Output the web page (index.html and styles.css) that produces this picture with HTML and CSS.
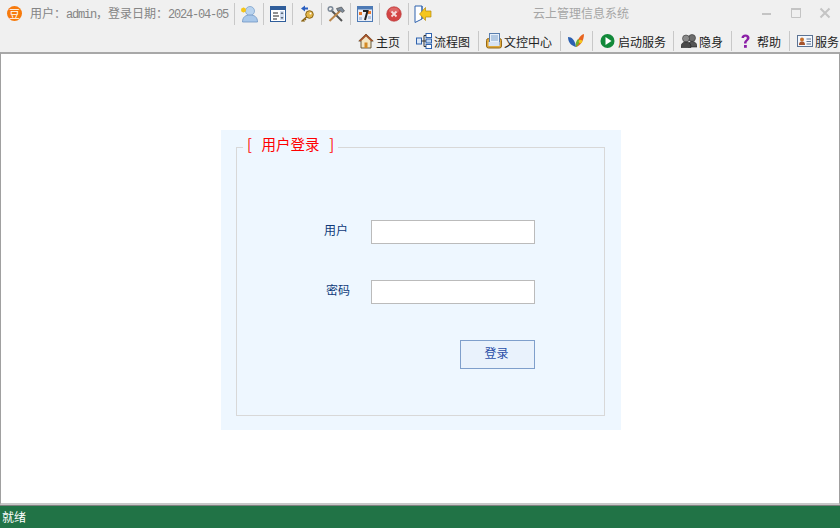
FILE: index.html
```html
<!DOCTYPE html>
<html lang="en">
<head>
    <meta charset="UTF-8">
    <meta name="viewport" content="width=device-width, initial-scale=1.0">
    <title>云上管理信息系统</title>
    <link rel="stylesheet" href="styles.css">
</head>
<body>

<!-- Title row -->
<div class="titleBar">
    <span class="logo">豆</span>
    <span class="userInfo">用户：<span class="latin">admin</span>，登录日期：<span class="latin">2024-04-05</span></span>
    <div class="quickTools">
        <span class="quickTool">
            <svg class="iconWide" viewBox="0 0 18 18">
                <circle cx="10" cy="6" r="4.500" fill="#b9d3ee" stroke="#7fa3cc" stroke-width=".8"/>
                <path d="M2.500 17c0-5 3-7 7.500-7s7.500 2 7.500 7z" fill="#a9c8ea" stroke="#6f96c4" stroke-width=".8"/>
                <path d="M1 5h5M3.500 2.500v5M1.700 3.200l3.600 3.600M5.300 3.200l-3.600 3.600" stroke="#f5c518" stroke-width="1.300"/>
            </svg>
        </span>
        <span class="quickTool">
            <svg class="icon" viewBox="0 0 16 16">
                <rect x=".5" y=".5" width="15" height="15" fill="#fff" stroke="#2f5d9a"/>
                <rect x="1" y="1" width="14" height="3" fill="#2f5d9a"/>
                <path d="M3 7h5M3 10h6M3 13h4" stroke="#222"/>
                <rect x="10" y="5" width="4" height="9" fill="#cfdcf0"/>
                <path d="M11 8l1-1.500 1 1.500M11 11l1 1.500 1-1.500" stroke="#234" fill="none" stroke-width=".8"/>
            </svg>
        </span>
        <span class="quickTool">
            <svg class="iconWide" viewBox="0 0 18 18">
                <path d="M3 3.500l4-3v2h3v2H7v2z" fill="#2a5fc0"/>
                <path d="M9 11.500L3.500 16.500M5 15l1.500 1.500M6.500 13.500L8 15" stroke="#8a6414" stroke-width="1.500" fill="none"/>
                <circle cx="11.500" cy="9.500" r="3.800" fill="#e2b548" stroke="#8a6414"/>
                <circle cx="12.500" cy="8.500" r="1" fill="#fff"/>
            </svg>
        </span>
        <span class="quickTool">
            <svg class="iconWide" viewBox="0 0 18 18">
                <path d="M4 5l11 11" stroke="#555" stroke-width="2"/>
                <path d="M13 6L2.500 16" stroke="#b9854a" stroke-width="2"/>
                <path d="M9.500 3.500l5-1.500 3 4-2 1.500-3-2-1.500 1z" fill="#7d8a99" stroke="#444" stroke-width=".6"/>
                <circle cx="3.500" cy="4" r="2.300" fill="none" stroke="#7d8a99" stroke-width="1.500"/>
            </svg>
        </span>
        <span class="quickTool">
            <svg class="icon" viewBox="0 0 16 16">
                <rect x=".5" y=".5" width="15" height="15" fill="#e9eef7" stroke="#4d7ab5"/>
                <rect x="1" y="1" width="14" height="2.500" fill="#4d7ab5"/>
                <rect x="2" y="6" width="3" height="3" fill="#e8762a"/>
                <rect x="11" y="5" width="3" height="3" fill="#e8762a"/>
                <rect x="2" y="11" width="3" height="3" fill="#b4c6e0"/>
                <rect x="11" y="10" width="3" height="3" fill="#b4c6e0"/>
                <path d="M6 5h4.500L8 14" fill="none" stroke="#222" stroke-width="2"/>
            </svg>
        </span>
        <span class="quickTool">
            <svg class="icon" viewBox="0 0 16 16">
                <circle cx="8" cy="8" r="7.300" fill="#d34444" stroke="#b73c3c" stroke-width=".6"/>
                <ellipse cx="8" cy="4.500" rx="5" ry="3" fill="#e67f7f" opacity=".6"/>
                <path d="M5.500 5.500l5 5M10.500 5.500l-5 5" stroke="#f6dcdc" stroke-width="1.800"/>
            </svg>
        </span>
        <span class="quickTool">
            <svg class="iconWide" viewBox="0 0 18 18">
                <path d="M1 1h7v13l-7 3.500z" fill="#fff" stroke="#2f62ad"/>
                <path d="M8 1v13" stroke="#2f62ad"/>
                <path d="M5.500 9l6-6.500v3.500h5.500v6h-5.500v3.500z" fill="#f5c61e" stroke="#b58a10" stroke-width=".7"/>
            </svg>
        </span>
    </div>
    <span class="appTitle">云上管理信息系统</span>
    <div class="windowButtons">
        <svg width="12" height="12" viewBox="0 0 12 12"><path d="M1 7h9" stroke="#c4c4c4" stroke-width="2"/></svg>
        <svg width="12" height="12" viewBox="0 0 12 12"><path d="M1.500 1.500h9v9h-9z" fill="none" stroke="#c4c4c4"/><path d="M1 2h10" stroke="#c4c4c4" stroke-width="2"/></svg>
        <svg width="12" height="12" viewBox="0 0 12 12"><path d="M1.500 1.500l9 9M10.500 1.500l-9 9" stroke="#c4c4c4" stroke-width="2"/></svg>
    </div>
</div>

<!-- Menu row -->
<div class="menuBar">
    <span class="menuItem menuFirst">
        <svg class="icon" viewBox="0 0 16 16">
            <path d="M8 1L0.800 8h2.200v7h10V8h2.200z" fill="#f3e6c4" stroke="#5a4a2a" stroke-width=".9"/>
            <path d="M8 1L0.800 8h2.500L8 3.500 12.700 8h2.500z" fill="#a5532b"/>
            <rect x="6.500" y="9.500" width="3" height="5.500" fill="#d38a25"/>
        </svg>
        主页
    </span>
    <span class="menuItem">
        <svg class="icon" viewBox="0 0 16 16">
            <rect x=".5" y="5" width="5" height="6" fill="#dce8f7" stroke="#2f62ad"/>
            <rect x="10" y=".5" width="5.500" height="4" fill="#fff" stroke="#2f62ad"/>
            <rect x="10" y="6" width="5.500" height="4" fill="#bcd3ee" stroke="#2f62ad"/>
            <rect x="10" y="11.500" width="5.500" height="4" fill="#fff" stroke="#2f62ad"/>
            <path d="M5.500 8H8M8 2.500V13.500M8 2.500h2M8 8h2M8 13.500h2" stroke="#333" fill="none"/>
        </svg>
        流程图
    </span>
    <span class="menuItem">
        <svg class="icon" viewBox="0 0 16 16">
            <rect x=".5" y="5.500" width="15" height="9.500" rx="2" fill="#e0a93a" stroke="#94691a"/>
            <rect x="3.500" y=".5" width="10" height="11" fill="#e8f0fa" stroke="#5a7fae"/>
            <path d="M5 3h7M5 5h7M5 7h7" stroke="#7fa3cc"/>
            <rect x="2.500" y="9" width="11" height="4" fill="#d8e3f2"/>
        </svg>
        文控中心
    </span>
    <span class="menuItem">
        <svg class="icon" viewBox="0 0 16 16">
            <path d="M0 4c4 0 7 3 8 10-4-1-8-4-8-10z" fill="#2a5fb0"/>
            <path d="M16 1c-4 1-7 6-8 13 4-1 8-6 8-13z" fill="#e8641e"/>
            <path d="M8 14c-1-3 0-6 2-8 2 1 2 5-2 8z" fill="#6fae2e"/>
            <circle cx="12.500" cy="8.500" r="1.800" fill="#f3c51d"/>
        </svg>
    </span>
    <span class="menuItem menuRun">
        <svg class="icon" viewBox="0 0 16 16">
            <circle cx="7.500" cy="8" r="7" fill="#12893a"/>
            <path d="M5.500 4l6 4-6 4z" fill="#fff"/>
        </svg>
        启动服务
    </span>
    <span class="menuItem">
        <svg class="icon" viewBox="0 0 16 16">
            <circle cx="11" cy="5" r="3.500" fill="#6d6d6d" stroke="#333" stroke-width=".6"/>
            <path d="M7 14c0-4 1.500-5.500 4-5.500s5 1.500 5 5.500z" fill="#555" stroke="#222" stroke-width=".6"/>
            <circle cx="5" cy="5.500" r="3.500" fill="#8a8a8a" stroke="#333" stroke-width=".6"/>
            <path d="M0 14.500c0-4 2-5.500 5-5.500s5 1.500 5 5.500z" fill="#4a4a4a" stroke="#222" stroke-width=".6"/>
        </svg>
        隐身
    </span>
    <span class="menuItem">
        <svg class="icon" viewBox="0 0 16 16">
            <path d="M2.500 5c0-2 1.500-3.500 4-3.500s4 1.400 4 3.300c0 3-3 2.800-3 5.700H5c0-3.800 2.800-3.600 2.800-5.600 0-.7-.5-1.200-1.300-1.200S5 4.200 5 5z" fill="#8a1fa6"/>
            <rect x="5" y="12" width="2.800" height="2.800" fill="#8a1fa6"/>
        </svg>
        帮助
    </span>
    <span class="menuItem menuLast">
        <svg class="icon" viewBox="0 0 16 16">
            <rect x=".5" y="2.500" width="15" height="11" fill="#f4f7fb" stroke="#5b7394"/>
            <circle cx="5" cy="6.500" r="2" fill="#c86f2a"/>
            <path d="M2 12c0-3 1.500-3.500 3-3.500s3 .5 3 3.500z" fill="#a5532b"/>
            <path d="M9.500 6h4.500M9.500 8.500h4.500M9.500 11h4.500" stroke="#5b7394"/>
        </svg>
        服务
    </span>
</div>

<!-- Main area -->
<div class="mainArea">
    <div class="loginPanel">
        <fieldset class="loginBox">
            <legend class="loginLegend">[ 用户登录 ]</legend>
            <div class="loginForm">
                <label class="loginLabel">用户</label>
                <input class="loginInput" type="text">
                <label class="loginLabel loginLabelPwd">密码</label>
                <input class="loginInput" type="password">
                <button class="loginButton">登录</button>
            </div>
        </fieldset>
    </div>
</div>

<div class="statusBar">就绪</div>

</body>
</html>
```

FILE: styles.css
```css
/* Page frame */
html, body {
    height: 100%;
}
body {
    margin: 0;
    display: flex;
    flex-direction: column;
    overflow: hidden;
    background: #f0f0f0;
    font-family: "Noto Sans CJK SC", "Liberation Sans", sans-serif;
    font-size: 12px;
    color: #222;
}
.icon {
    width: 16px;
    height: 16px;
    flex: none;
}
.iconWide {
    width: 18px;
    height: 18px;
    flex: none;
}

/* Title row */
.titleBar {
    display: flex;
    align-items: center;
    height: 27px;
    padding-left: 7px;
}
.logo {
    width: 15px;
    height: 15px;
    border-radius: 50%;
    background: #f77a0c;
    color: #fff;
    font-size: 11px;
    line-height: 15px;
    text-align: center;
    flex: none;
}
.userInfo {
    width: 204px;
    margin-left: 8px;
    padding-bottom: 2px;
    color: #858585;
    white-space: nowrap;
}
.latin {
    font-family: "Liberation Mono", monospace;
    letter-spacing: -1.2px;
}
.quickTools {
    display: flex;
}
.quickTool {
    display: flex;
    align-items: center;
    justify-content: center;
    width: 28px;
    height: 22px;
    border-left: 1px solid #c8c8c8;
}
.appTitle {
    margin-left: 96px;
    padding-bottom: 2px;
    color: #a6a6a6;
    white-space: nowrap;
}
.windowButtons {
    display: flex;
    gap: 17px;
    margin-left: auto;
    margin-right: 9px;
    padding-bottom: 2px;
}

/* Menu row */
.menuBar {
    display: flex;
    justify-content: flex-end;
    align-items: flex-start;
    box-sizing: border-box;
    height: 25px;
    padding-top: 4px;
}
.menuItem {
    display: flex;
    align-items: center;
    gap: 2px;
    height: 20px;
    padding: 0 8px 0 7px;
    border-left: 1px solid #c8c8c8;
    white-space: nowrap;
}
.menuFirst {
    border-left: 0;
}
.menuRun {
    padding-right: 7px;
}
.menuLast {
    padding-right: 1px;
}

/* Main area */
.mainArea {
    flex: 1;
    min-height: 0;
    padding: 76px 0 0 2px;
    background: #fff;
    border: 1px solid #a0a0a0;
    border-top: 2px solid #a8a8a8;
    border-bottom: 2px solid #c8c8c8;
}
.loginPanel {
    width: 400px;
    height: 300px;
    box-sizing: border-box;
    margin: 0 auto;
    padding: 7px 16px 14px 15px;
    background: #eef7ff;
}
.loginBox {
    box-sizing: border-box;
    height: 100%;
    margin: 0;
    padding: 0;
    border: 1px solid #d8d8d8;
}
.loginLegend {
    margin-left: 6px;
    padding: 0 4px 6px;
    color: #f00;
    font-size: 14.500px;
    line-height: 14px;
    word-spacing: 6.400px;
}
.loginForm {
    display: grid;
    grid-template-columns: 134px 164px;
    grid-auto-rows: 24px;
    row-gap: 36px;
    align-items: center;
    padding-top: 63px;
}
.loginLabel {
    justify-self: end;
    padding: 0 23px 5px 0;
    color: #0f3a7a;
}
.loginLabelPwd {
    padding-right: 21px;
}
.loginInput {
    box-sizing: border-box;
    width: 164px;
    height: 24px;
    margin: 0;
    border: 1px solid #bbb;
    background: #fff;
}
.loginButton {
    grid-column: 2;
    justify-self: end;
    align-self: start;
    width: 75px;
    height: 29px;
    padding: 0 2px 4px 0;
    border: 1px solid #7f9fcb;
    background: #e9f2fc;
    color: #2a4fa8;
    font-family: inherit;
    font-size: 12px;
}

/* Status bar */
.statusBar {
    height: 22px;
    padding-left: 2px;
    border-top: 1px solid #808080;
    background: #217346;
    color: #fff;
    font-size: 12px;
    line-height: 22px;
}
```
